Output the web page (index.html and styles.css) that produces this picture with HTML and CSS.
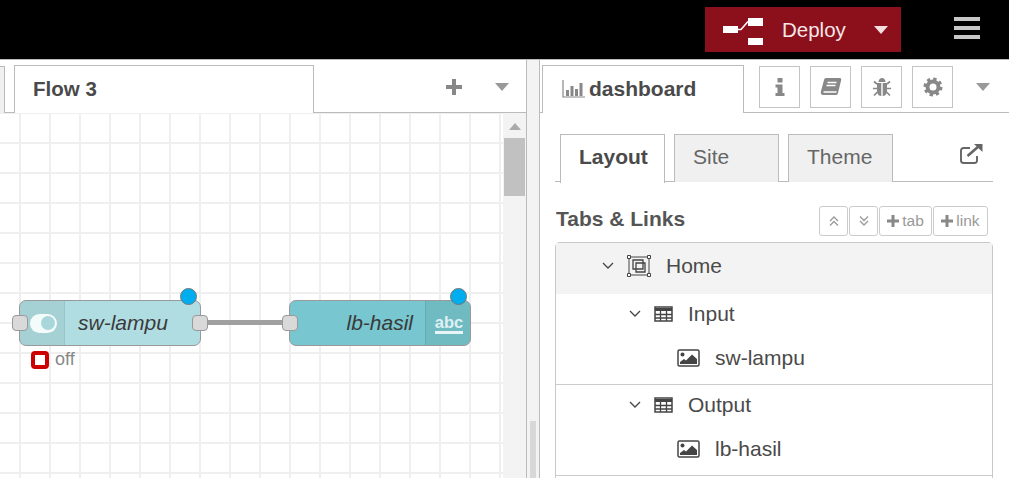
FILE: index.html
```html
<!DOCTYPE html>
<html lang="en">
<head>
<meta charset="utf-8">
<title>Node-RED</title>
<link rel="stylesheet" href="styles.css">
</head>
<body>
<header class="topbar">
  <button class="deploy">
    <svg class="deploy-icon" width="40" height="31" viewBox="0 0 40 31"><rect x="0" y="12" width="15" height="7" fill="#fff"/><rect x="25" y="4" width="15" height="8" fill="#fff"/><rect x="25" y="24" width="15" height="7" fill="#fff"/><path d="M15 15.500h3l7-8" fill="none" stroke="#fff" stroke-width="1.600"/></svg>
    <span class="deploy-label">Deploy</span>
    <svg class="deploy-caret" width="14" height="8" viewBox="0 0 14 8"><path d="M0 0h14L7 8z" fill="#f3dfe0"/></svg>
  </button>
  <div class="burger"><i></i><i></i><i></i></div>
</header>
<main class="body">
  <section class="workspace">
    <div class="ws-tabs">
      <div class="ws-stub"></div>
      <div class="ws-tab">Flow 3</div>
      <div class="ws-actions">
        <svg width="18" height="18" viewBox="0 0 18 18"><path d="M7 1h4v6h6v4h-6v6H7v-6H1V7h6z" fill="#888"/></svg>
        <svg width="14" height="8" viewBox="0 0 14 8"><path d="M0 0h14L7 8z" fill="#999"/></svg>
      </div>
    </div>
    <div class="ws-area">
      <div class="canvas">
        <div class="wire"></div>
        <div class="node node-switch">
          <span class="node-icon icon-left"><span class="toggle"><i></i></span></span>
          <span class="node-label">sw-lampu</span>
          <span class="port port-in"></span>
          <span class="port port-out"></span>
          <span class="badge"></span>
        </div>
        <div class="status"><span class="status-dot"></span><span>off</span></div>
        <div class="node node-text">
          <span class="node-label">lb-hasil</span>
          <span class="node-icon icon-right"><span class="abc">abc</span></span>
          <span class="port port-in"></span>
          <span class="badge"></span>
        </div>
      </div>
      <div class="scrollbar">
        <svg class="scroll-up" width="12" height="7" viewBox="0 0 12 7"><path d="M0 7h12L6 0z" fill="#aaa"/></svg>
        <div class="scroll-thumb"></div>
      </div>
    </div>
  </section>
  <div class="separator"><span class="sep-grip"></span></div>
  <aside class="sidebar">
    <div class="side-tabs">
      <div class="side-tab">
        <svg width="24" height="20" viewBox="0 0 24 20"><path d="M1 1v17h22" fill="none" stroke="#888" stroke-width="1.200"/><path d="M4 11h3v6H4zM8.500 7h3v10h-3zM13 10h3v7h-3zM17.500 4h3v13h-3z" fill="#888"/></svg>
        <span>dashboard</span>
      </div>
      <div class="side-btn"><svg width="12" height="20" viewBox="0 0 12 20"><path d="M3.500 1h5v4.500h-5zM1.500 7.500h7V16h2v3h-9v-3h2v-5.500h-2z" fill="#888"/></svg></div>
      <div class="side-btn"><svg width="22" height="20" viewBox="0 0 22 20"><path d="M6 1h14c1 0 1.500 1 1.200 2L18 16c-.4 1.500-1 2-2.500 2H3c-2 0-2.500-2-2-4L4 3c.3-1.200 1-2 2-2z" fill="#888"/><path d="M7.500 5.500h9M6.500 8.500h9M3.500 15h13" stroke="#fff" stroke-width="1.300" fill="none"/></svg></div>
      <div class="side-btn"><svg width="20" height="20" viewBox="0 0 20 20"><path d="M6.500 5c0-2 1.500-4 3.500-4s3.500 2 3.500 4z" fill="#888"/><path d="M5 6h4.300v13C7 19 5 17 5 14zM10.700 6H15v8c0 3-2 5-4.300 5z" fill="#888"/><path d="M5 7L2 4.500M15 7l3-2.500M5 11.500H1M15 11.500h4M5.500 15L2 18.500M14.500 15l3.500 3.500" stroke="#888" stroke-width="1.700" fill="none"/></svg></div>
      <div class="side-btn"><svg width="20" height="20" viewBox="0 0 20 20"><circle cx="10" cy="10" r="5.500" fill="none" stroke="#888" stroke-width="4"/><circle cx="10" cy="10" r="8" fill="none" stroke="#888" stroke-width="3" stroke-dasharray="3.280 3"/></svg></div>
      <svg class="side-caret" width="14" height="8" viewBox="0 0 14 8"><path d="M0 0h14L7 8z" fill="#999"/></svg>
    </div>
    <div class="panel">
      <div class="inner-tabs">
        <div class="inner-tab active">Layout</div>
        <div class="inner-tab">Site</div>
        <div class="inner-tab">Theme</div>
        <svg class="ext-link" width="23" height="20" viewBox="0 0 23 20"><path d="M17 12v4.500a2.500 2.500 0 0 1-2.500 2.500h-11A2.500 2.500 0 0 1 1 16.500v-10A2.500 2.500 0 0 1 3.500 4H10" fill="none" stroke="#666" stroke-width="1.900"/><path d="M7.500 12L19 2" fill="none" stroke="#666" stroke-width="2.600"/><path d="M14 0h8.500v8z" fill="#666"/></svg>
      </div>
      <div class="section-head">
        <h2>Tabs &amp; Links</h2>
        <div class="tools">
          <span class="tool tool-sq"><svg width="12" height="12" viewBox="0 0 12 12"><path d="M2 6l4-4 4 4M2 10.500l4-4 4 4" fill="none" stroke="#999" stroke-width="1.300"/></svg></span>
          <span class="tool tool-sq"><svg width="12" height="12" viewBox="0 0 12 12"><path d="M2 1.500l4 4 4-4M2 6l4 4 4-4" fill="none" stroke="#999" stroke-width="1.300"/></svg></span>
          <span class="tool tool-tab"><svg width="12" height="12" viewBox="0 0 12 12"><path d="M4.500 0h3v4.500H12v3H7.500V12h-3V7.500H0v-3h4.500z" fill="#888"/></svg>tab</span>
          <span class="tool tool-link"><svg width="12" height="12" viewBox="0 0 12 12"><path d="M4.500 0h3v4.500H12v3H7.500V12h-3V7.500H0v-3h4.500z" fill="#888"/></svg>link</span>
        </div>
      </div>
      <div class="tree">
        <div class="row row-home">
          <svg class="chev" width="12" height="8" viewBox="0 0 12 8"><path d="M1 1l5 5 5-5" fill="none" stroke="#444" stroke-width="1.300"/></svg>
          <svg class="ico-home" width="24" height="22" viewBox="0 0 24 22"><path d="M2 2h20v18H2z" fill="none" stroke="#444" stroke-width="1"/><path d="M6 5h10v9H6zM9 8h9v9H9z" fill="none" stroke="#444" stroke-width="1.300"/><path d="M.5.500h3v3h-3zM20.500.500h3v3h-3zM.5 18.500h3v3h-3zM20.500 18.500h3v3h-3z" fill="#fff" stroke="#444"/></svg>
          <span>Home</span>
        </div>
        <div class="group">
          <div class="row row-group">
            <svg class="chev" width="12" height="8" viewBox="0 0 12 8"><path d="M1 1l5 5 5-5" fill="none" stroke="#444" stroke-width="1.300"/></svg>
            <svg class="ico-table" width="19" height="16" viewBox="0 0 19 16"><path d="M1 1h17v14H1z" fill="none" stroke="#444" stroke-width="1.500"/><path d="M1 2h17v3H1z" fill="#444"/><path d="M1 8.500h17M1 12h17M6.500 3v12M12.500 3v12" stroke="#444" stroke-width="1.300" fill="none"/></svg>
            <span>Input</span>
          </div>
          <div class="row row-item">
            <svg class="ico-image" width="23" height="18" viewBox="0 0 23 18"><rect x="1" y="1" width="21" height="16" rx="1.500" fill="none" stroke="#444" stroke-width="1.500"/><circle cx="5.500" cy="5.500" r="2" fill="#444"/><path d="M3 15v-2l4-3 2 1.500L15 5.500 20 10v5z" fill="#444"/></svg>
            <span>sw-lampu</span>
          </div>
        </div>
        <div class="group">
          <div class="row row-group">
            <svg class="chev" width="12" height="8" viewBox="0 0 12 8"><path d="M1 1l5 5 5-5" fill="none" stroke="#444" stroke-width="1.300"/></svg>
            <svg class="ico-table" width="19" height="16" viewBox="0 0 19 16"><path d="M1 1h17v14H1z" fill="none" stroke="#444" stroke-width="1.500"/><path d="M1 2h17v3H1z" fill="#444"/><path d="M1 8.500h17M1 12h17M6.500 3v12M12.500 3v12" stroke="#444" stroke-width="1.300" fill="none"/></svg>
            <span>Output</span>
          </div>
          <div class="row row-item">
            <svg class="ico-image" width="23" height="18" viewBox="0 0 23 18"><rect x="1" y="1" width="21" height="16" rx="1.500" fill="none" stroke="#444" stroke-width="1.500"/><circle cx="5.500" cy="5.500" r="2" fill="#444"/><path d="M3 15v-2l4-3 2 1.500L15 5.500 20 10v5z" fill="#444"/></svg>
            <span>lb-hasil</span>
          </div>
        </div>
      </div>
    </div>
  </aside>
</main>
</body>
</html>
```
FILE: styles.css
```css
* { box-sizing: border-box; }
html, body { margin: 0; height: 100%; overflow: hidden; }
body { width: 1009px; height: 478px; font-family: "Liberation Sans", Arial, sans-serif; color: #444; background: #fff; display: flex; flex-direction: column; }

.topbar { height: 60px; flex: none; background: #000; border-bottom: 1px solid #bbb; display: flex; justify-content: flex-end; align-items: flex-start; padding: 7px 29px 0 0; }
.deploy { width: 196px; height: 45px; border: 0; padding: 0 0 0 18px; background: #8c101c; color: #f5e6e7; display: flex; align-items: center; font: 20.500px "Liberation Sans", Arial, sans-serif; }
.deploy-icon { flex: none; }
.deploy-label { margin-left: 19px; padding-top: 1px; }
.deploy-caret { margin-left: 28px; }
.burger { margin-left: 53px; margin-top: 10px; width: 26px; display: flex; flex-direction: column; gap: 5px; }
.burger i { display: block; height: 4px; background: #c7c7c7; }

.body { flex: 1; min-height: 0; display: flex; }
.workspace { width: 527px; flex: none; display: flex; flex-direction: column; border-right: 1px solid #bbb; }
.ws-tabs { height: 53px; flex: none; border-bottom: 1px solid #bbb; display: flex; align-items: flex-end; position: relative; padding-top: 5px; }
.ws-stub { width: 5px; height: 47px; margin-bottom: -1px; background: #f0f0f0; border-right: 1px solid #bbb; border-top: 1px solid #bbb; }
.ws-tab { margin-left: 9px; width: 300px; height: 48px; margin-bottom: -1px; border: 1px solid #bbb; border-bottom: 0; background: #fff; font-weight: 700; font-size: 20.500px; color: #4a4a4a; padding: 11px 0 0 18px; }
.ws-actions { flex: 1; align-self: center; display: flex; align-items: center; padding-left: 131px; gap: 32px; margin-top: -3px; }

.ws-area { flex: 1; min-height: 0; display: flex; }
.canvas { flex: 1; position: relative; overflow: hidden; background-color: #fff; background-image: linear-gradient(#efefef 2px, transparent 2px), linear-gradient(90deg, #efefef 2px, transparent 2px); background-size: 30px 30px; background-position: 19px 29px; }
.scrollbar { width: 23px; flex: none; background: #f3f3f3; display: flex; flex-direction: column; align-items: center; padding-top: 10px; }
.scroll-thumb { width: 21px; height: 58px; margin-top: 8px; background: #c1c1c1; }

.node { position: absolute; top: 187px; height: 46px; border: 1px solid #999; border-radius: 7px; display: flex; align-items: center; }
.node-switch { left: 19px; width: 182px; background: #b0dde2; }
.node-text { left: 289px; width: 182px; background: #78c6cf; }
.node-icon { width: 45px; height: 100%; flex: none; display: flex; align-items: center; justify-content: center; background: rgba(0,0,0,0.06); }
.icon-left { border-right: 1px solid #9cc4c8; border-radius: 6px 0 0 6px; }
.icon-right { border-left: 1px solid #67aab2; border-radius: 0 6px 6px 0; }
.node-label { flex: 1; font-size: 21px; font-style: italic; color: #3a3a3a; }
.node-switch .node-label { padding-left: 13px; }
.node-text .node-label { text-align: right; padding-right: 12px; }
.toggle { width: 27px; height: 19px; margin-left: 3px; border-radius: 10px; background: #f4fbfb; display: flex; align-items: center; justify-content: flex-end; padding-right: 2px; }
.toggle i { width: 14px; height: 14px; border-radius: 50%; background: #a9d6da; display: block; }
.abc { font-size: 16.500px; font-weight: 700; color: #dff0f2; border-bottom: 3px solid #e8f4f5; line-height: 16px; padding-bottom: 1px; margin-left: 2px; margin-top: 2px; }
.port { position: absolute; width: 16px; height: 16px; top: 14px; background: #d9d9d9; border: 1px solid #999; border-radius: 4px; }
.port-in { left: -8px; }
.port-out { right: -8px; }
.badge { position: absolute; top: -13px; right: 3px; width: 17px; height: 17px; border-radius: 50%; background: #00aeef; border: 1px solid #777; }
.wire { position: absolute; left: 200px; top: 207px; width: 90px; height: 5px; background: #a0a0a0; }
.status { position: absolute; left: 31px; top: 236px; display: flex; align-items: center; gap: 6px; font-size: 18px; color: #888; }
.status-dot { width: 18px; height: 18px; border: 4px solid #c00; border-radius: 4px; background: #fff; }

.separator { width: 13px; flex: none; background: #f3f3f3; border-right: 1px solid #bbb; position: relative; }
.sep-grip { position: absolute; left: 3px; top: 361px; width: 6px; height: 58px; background: #d8d8d8; }

.sidebar { flex: 1; min-width: 0; display: flex; flex-direction: column; }
.side-tabs { height: 53px; flex: none; border-bottom: 1px solid #bbb; display: flex; align-items: flex-start; padding: 5px 0 0 2px; }
.side-tab { width: 202px; height: 48px; border: 1px solid #bbb; border-bottom: 0; background: #fff; display: flex; align-items: center; gap: 3px; padding: 0 0 2px 19px; font-weight: 700; font-size: 21px; color: #4a4a4a; }
.side-btn { width: 41px; height: 42px; margin-top: 1px; border: 1px solid #c4c4c4; display: flex; align-items: center; justify-content: center; margin-right: 10px; }
.side-tab + .side-btn { margin-left: 15px; }
.side-caret { margin: 18px 0 0 13px; }

.panel { flex: 1; min-height: 0; padding: 21px 16px 0 15px; }
.inner-tabs { height: 48px; border-bottom: 1px solid #bbb; display: flex; align-items: flex-start; padding-left: 5px; gap: 9px; position: relative; }
.inner-tab { width: 105px; height: 48px; border: 1px solid #bbb; border-bottom: 0; background: #f0f0f0; color: #666; font-size: 21px; padding: 10px 0 0 18px; }
.inner-tab.active { background: #fff; color: #4a4a4a; font-weight: 700; height: 49px; }
.ext-link { position: absolute; left: 405px; top: 10px; }
.section-head { height: 60px; display: flex; align-items: center; justify-content: space-between; padding: 14px 5px 0 1px; }
h2 { margin: 0; font-size: 21px; font-weight: 700; color: #555; }
.tools { display: flex; gap: 1px; margin-top: 4px; }
.tool { height: 30px; border: 1px solid #ccc; border-radius: 3px; display: flex; align-items: center; justify-content: center; gap: 3px; font-size: 15.500px; color: #999; background: #fff; }
.tool-sq { width: 29px; }
.tool-tab { width: 53px; }
.tool-link { width: 55px; }

.tree { border: 1px solid #c8c8c8; border-bottom: 0; border-radius: 5px 5px 0 0; height: 236px; }
.row { display: flex; align-items: center; font-size: 21px; color: #4a4a4a; }
.row-home { height: 51px; background: #f3f3f3; padding: 0 0 6px 46px; }
.ico-home { margin-left: 13px; margin-right: 15px; }
.row-group { height: 44px; padding: 0 0 5px 73px; }
.ico-table { margin-left: 13px; margin-right: 15px; }
.row-item { height: 43px; padding: 0 0 3px 121px; }
.ico-image { margin-right: 15px; }
.group { border-bottom: 1px solid #ccc; height: 91px; }
```
